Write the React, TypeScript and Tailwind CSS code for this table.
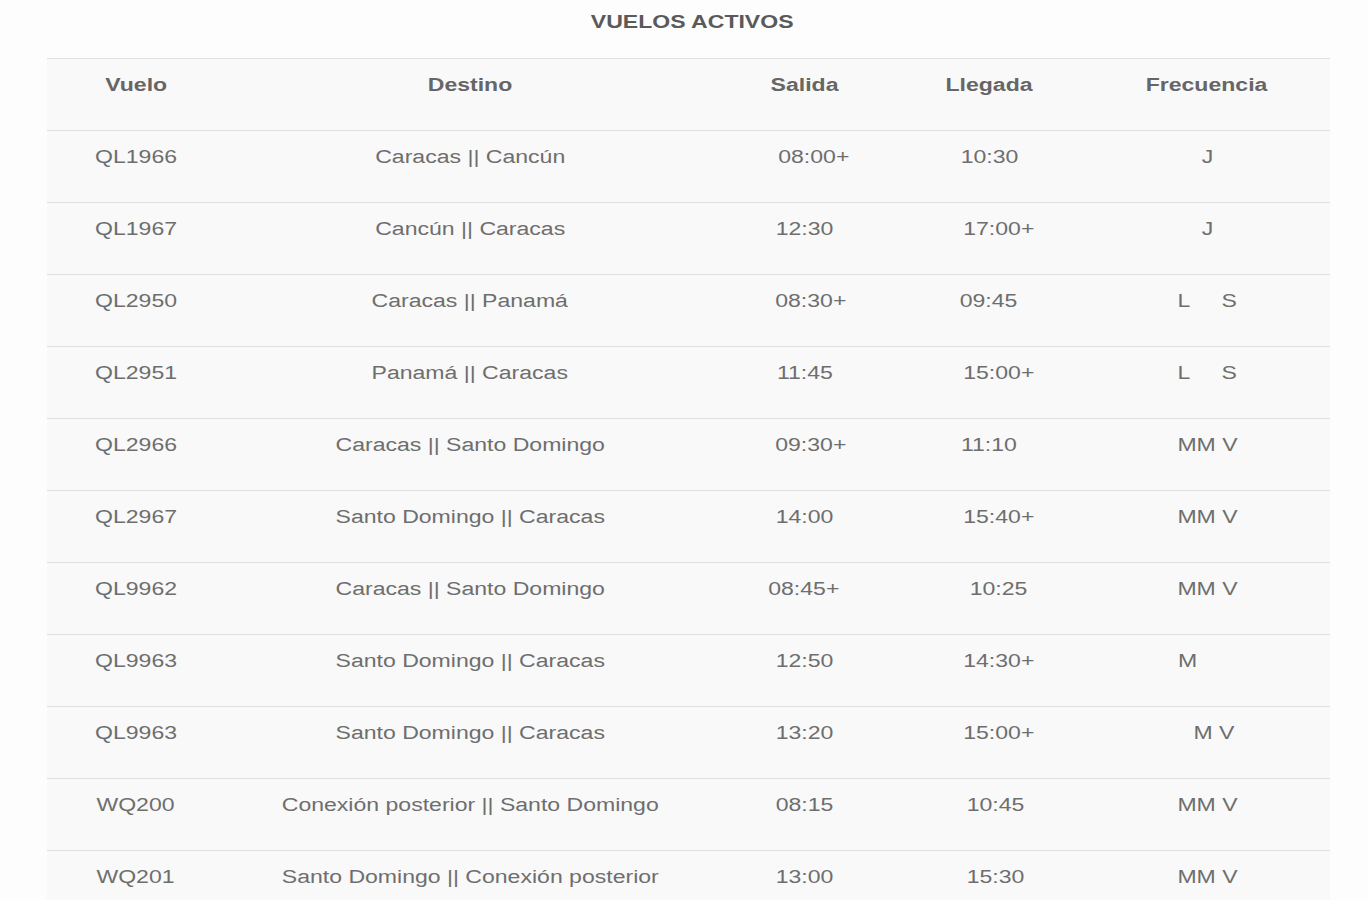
const columns = [
  { label: "Vuelo", width: "w-[178px]" },
  { label: "Destino", width: "w-[490px]" },
  { label: "Salida", width: "w-[180px]" },
  { label: "Llegada", width: "w-[188px]" },
  { label: "Frecuencia", width: "flex-1" },
];

// each cell: [text, horizontal offset from column centre in px]
type Cell = [string, number];

const flights: Cell[][] = [
  [["QL1966", 0], ["Caracas || Cancún", 0], ["08:00+", 9], ["10:30", 1], ["J", 1]],
  [["QL1967", 0], ["Cancún || Caracas", 0], ["12:30", 0], ["17:00+", 10], ["J", 1]],
  [["QL2950", 0], ["Caracas || Panamá", 0], ["08:30+", 6], ["09:45", 0], ["L     S", 1]],
  [["QL2951", 0], ["Panamá || Caracas", 0], ["11:45", 0], ["15:00+", 10], ["L     S", 1]],
  [["QL2966", 0], ["Caracas || Santo Domingo", 0], ["09:30+", 6], ["11:10", 0], ["MM V", 1]],
  [["QL2967", 0], ["Santo Domingo || Caracas", 0], ["14:00", 0], ["15:40+", 10], ["MM V", 1]],
  [["QL9962", 0], ["Caracas || Santo Domingo", 0], ["08:45+", -1], ["10:25", 10], ["MM V", 1]],
  [["QL9963", 0], ["Santo Domingo || Caracas", 0], ["12:50", 0], ["14:30+", 10], ["M", -19]],
  [["QL9963", 0], ["Santo Domingo || Caracas", 0], ["13:20", 0], ["15:00+", 10], ["M V", 8]],
  [["WQ200", 0], ["Conexión posterior || Santo Domingo", 0], ["08:15", 0], ["10:45", 7], ["MM V", 1]],
  [["WQ201", 0], ["Santo Domingo || Conexión posterior", 0], ["13:00", 0], ["15:30", 7], ["MM V", 1]],
];

function Text({ children, bold }: { children: string; bold?: boolean }) {
  return (
    <span
      className={`inline-block whitespace-pre scale-x-[1.28] ${bold ? "font-bold text-[#666]" : "text-[#6e6e6e]"}`}
    >
      {children}
    </span>
  );
}

export default function App() {
  return (
    <div
      className="min-h-[900px] bg-[#fdfdfd] text-[18px] leading-[24px]"
      style={{ fontFamily: '"Liberation Sans", Arial, sans-serif' }}
    >
      <div className="pt-[10px] pb-[24px] pl-[16px] flex justify-center">
        <span className="inline-block scale-x-[1.28] font-bold text-[#5a5a5a]">VUELOS ACTIVOS</span>
      </div>

      <div className="ml-[47px] w-[1283px] bg-[#f9f9f9] border-t border-[#e0e0e0]">
        {/* Header */}
        <div className="flex h-[72px] border-b border-[#e0e0e0]">
          {columns.map((col) => (
            <div key={col.label} className={`${col.width} pt-[14px] text-center`}>
              <Text bold>{col.label}</Text>
            </div>
          ))}
        </div>

        {/* Rows */}
        {flights.map((row, i) => (
          <div key={i} className="flex h-[72px] border-b border-[#e0e0e0]">
            {row.map(([text, dx], j) => (
              <div key={j} className={`${columns[j].width} pt-[14px] text-center`}>
                <span className="inline-block" style={{ transform: `translateX(${dx}px)` }}>
                  <Text>{text}</Text>
                </span>
              </div>
            ))}
          </div>
        ))}
      </div>
    </div>
  );
}
